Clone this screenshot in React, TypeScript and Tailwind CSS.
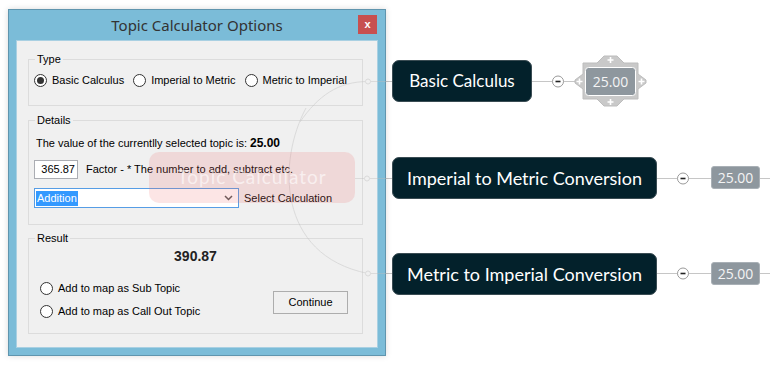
import React from 'react'

const ui = { fontFamily: '"Liberation Sans", Arial, sans-serif' }
const segoe = { fontFamily: '"Noto Sans", "Open Sans", sans-serif' }
const map = { fontFamily: 'Lato, "Noto Sans", sans-serif' }
const val = { fontFamily: '"Open Sans", "Noto Sans", sans-serif' }

function Radio({ checked, label }: { checked?: boolean; label: string }) {
  return (
    <label className="flex items-center gap-[5px] h-[13px] leading-[13px]">
      <span className="flex h-[13px] w-[13px] items-center justify-center rounded-full border border-[#333] bg-white">
        {checked && <span className="h-[7px] w-[7px] rounded-full bg-[#333]" />}
      </span>
      <span>{label}</span>
    </label>
  )
}

function Group({ title, className, children }: { title: string; className: string; children: React.ReactNode }) {
  return (
    <fieldset className={`ml-[11px] w-[335px] border border-[#dcdcdc] ${className}`}>
      <legend className="ml-[6px] px-[2px] leading-[13px]">{title}</legend>
      {children}
    </fieldset>
  )
}

function Minus({ x, y }: { x: number; y: number }) {
  return (
    <g>
      <circle cx={x} cy={y} r={5.5} fill="#fff" stroke="#9a9a9a" />
      <path d={`M ${x - 2.5} ${y} H ${x + 2.5}`} stroke="#222" strokeWidth={1.6} />
    </g>
  )
}

function ValueBox({ top }: { top: number }) {
  return (
    <div
      className="absolute left-[711px] flex h-[23px] w-[49px] items-center justify-center rounded-[3px] border border-[#a9b0b6] bg-[#8e979e] text-[14px] text-[#f4f4f4]"
      style={{ ...val, top }}
    >
      25.00
    </div>
  )
}

export default function App() {
  return (
    <div className="relative h-[366px] w-[770px] overflow-hidden bg-white">
      {/* mind map connectors behind the dialog */}
      <svg className="absolute inset-0" width={770} height={366}>
        <g stroke="#c6c6c6" strokeWidth={1} fill="none">
          <path d="M 360 81.5 H 392 M 532 81.5 H 576" />
          <path d="M 360 178.5 H 392 M 657 178.5 H 711 M 760 178.5 H 770" />
          <path d="M 360 273.5 H 392 M 657 273.5 H 711 M 760 273.5 H 770" />
        </g>
        <Minus x={558} y={81.5} />
        <Minus x={683} y={178.5} />
        <Minus x={683} y={273.5} />
      </svg>

      {/* topic nodes */}
      <div
        className="absolute left-[392px] top-[60px] flex h-[42px] w-[140px] items-center justify-center rounded-[7px] border border-[#3a4c53] bg-[#03212b] text-[17px] text-white"
        style={map}
      >
        Basic Calculus
      </div>
      <div
        className="absolute left-[392px] top-[157px] flex h-[42px] w-[265px] items-center justify-center rounded-[7px] border border-[#3a4c53] bg-[#03212b] text-[18px] text-white"
        style={map}
      >
        Imperial to Metric Conversion
      </div>
      <div
        className="absolute left-[392px] top-[253px] flex h-[42px] w-[265px] items-center justify-center rounded-[7px] border border-[#3a4c53] bg-[#03212b] text-[18px] text-white"
        style={map}
      >
        Metric to Imperial Conversion
      </div>

      {/* selected value node with handles */}
      <div className="absolute left-[574px] top-[54px] flex h-[54px] w-[73px] items-center justify-center">
        <svg className="absolute inset-0" width={73} height={54}>
          <path
            d="M 9 9 H 23 L 30 2 H 43 L 50 9 H 64 V 20 L 72 26 V 29 L 64 35 V 45 H 50 L 43 52 H 30 L 23 45 H 9 V 35 L 1 29 V 26 L 9 20 Z"
            fill="#c9c9c9"
            stroke="#bdbdbd"
          />
          <g stroke="#fff" strokeWidth={1.6}>
            <path d="M 33.5 6 H 39.5 M 36.5 3 V 9" />
            <path d="M 33.5 48 H 39.5 M 36.5 45 V 51" />
            <path d="M 2.5 27.5 H 8.5 M 5.5 24.5 V 30.5" />
            <path d="M 64.5 27.5 H 70.5 M 67.5 24.5 V 30.5" />
          </g>
          <rect x={11.5} y={13.5} width={50} height={28} rx={3} fill="#8e979e" stroke="#fff" />
        </svg>
        <span className="relative text-[14px] text-[#f4f4f4]" style={val}>
          25.00
        </span>
      </div>
      <ValueBox top={166} />
      <ValueBox top={262} />

      {/* dialog window */}
      <div
        className="absolute left-[8px] top-[9px] flex h-[347px] w-[378px] flex-col border border-[#5f95ae] bg-[#7bbcd8] shadow-[0_0_6px_rgba(0,0,0,0.15)]"
        style={ui}
      >
        <div className="relative flex h-[30px] items-center justify-center">
          <span className="text-[15px] text-[#333]" style={segoe}>
            Topic Calculator Options
          </span>
          <div className="absolute right-[8px] top-[5px] flex h-[19px] w-[19px] items-center justify-center bg-[#c75050] text-[11px] font-bold text-white">
            x
          </div>
        </div>
        <div className="mx-[7px] mb-[7px] flex flex-1 flex-col border border-[#a9d0e2] bg-[#f0f0f0] pt-[12px] text-[11px] text-black">
          <Group title="Type" className="h-[53px]">
            <div className="flex items-center gap-[9px] pl-[5px] pt-[8px]">
              <Radio checked label="Basic Calculus" />
              <Radio label="Imperial to Metric" />
              <Radio label="Metric to Imperial" />
            </div>
          </Group>

          <Group title="Details" className="mt-[8px] h-[111px]">
            <div className="pl-[7px] pt-[10px] leading-[13px]">
              The value of the currentlly selected topic is: <b className="text-[12px]">25.00</b>
            </div>
            <div className="mt-[10px] flex items-center pl-[5px]">
              <div className="flex h-[19px] w-[44px] items-center justify-end border border-[#abadb3] bg-white pr-[2px]">
                365.87
              </div>
              <span className="ml-[8px]">Factor - * The number to add, subtract etc.</span>
            </div>
            <div className="mt-[9px] flex items-center pl-[5px]">
              <div className="relative flex h-[20px] w-[205px] items-center border border-[#569de5] bg-white pl-[1px]">
                <span className="bg-[#3399ff] px-[1px] leading-[15px] text-white">Addition</span>
                <svg className="absolute right-[5px] top-[6px]" width={9} height={6}>
                  <path d="M 1 1 L 4.5 4.5 L 8 1" stroke="#555" strokeWidth={1.5} fill="none" />
                </svg>
              </div>
              <span className="ml-[5px]">Select Calculation</span>
            </div>
          </Group>

          <Group title="Result" className="mt-[7px] h-[102px]">
            <div className="mt-[3px] text-center text-[14px] font-bold leading-[16px] text-[#222]">390.87</div>
            <div className="mt-[18px] flex items-start justify-between pl-[11px] pr-[14px]">
              <div className="flex flex-col gap-[10px]">
                <Radio label="Add to map as Sub Topic" />
                <Radio label="Add to map as Call Out Topic" />
              </div>
              <div className="mt-[9px] flex h-[23px] w-[75px] items-center justify-center border border-[#adadad] bg-[#f0f0f0]">
                Continue
              </div>
            </div>
          </Group>
        </div>
      </div>

      {/* mind map showing faintly through the dialog */}
      <svg className="pointer-events-none absolute inset-0 opacity-40" width={770} height={366}>
        <g stroke="#bcbcbc" strokeWidth={1} fill="none">
          <path d="M 300 122 C 318 96, 338 81.5, 368 81.5 H 386" />
          <path d="M 306 108 C 278 160, 276 255, 368 273.5 H 386" />
          <path d="M 355 178.5 H 386" />
          <circle cx={368} cy={81.5} r={2.5} fill="#f0f0f0" />
          <circle cx={367} cy={178.5} r={2.5} fill="#f0f0f0" />
          <circle cx={368} cy={273.5} r={2.5} fill="#f0f0f0" />
        </g>
      </svg>
      <div className="pointer-events-none absolute left-[149px] top-[152px] flex h-[51px] w-[206px] items-center justify-center rounded-[10px] bg-[rgba(236,110,110,0.18)]">
        <span className="text-[19px] tracking-[1px] text-white/60" style={map}>
          Topic Calculator
        </span>
      </div>
    </div>
  )
}
